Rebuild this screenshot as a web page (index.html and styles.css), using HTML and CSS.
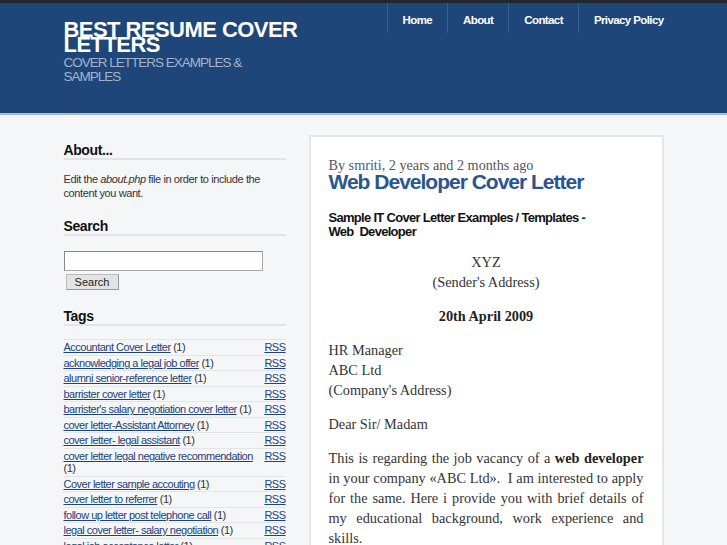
FILE: index.html
```html
<!DOCTYPE html>
<html>
<head>
<meta charset="utf-8">
<title>Best Resume Cover Letters</title>
<link rel="stylesheet" href="styles.css">
</head>
<body>
<header class="header">
  <div class="container header-inner">
    <div class="brand">
      <h1 class="site-title">BEST RESUME COVER LETTERS</h1>
      <div class="tagline">COVER LETTERS EXAMPLES &amp; SAMPLES</div>
      <div class="mark"></div>
    </div>
    <nav class="nav">
      <a href="#">Home</a>
      <a href="#">About</a>
      <a href="#">Contact</a>
      <a href="#" class="last">Privacy Policy</a>
    </nav>
  </div>
</header>
<div class="container page">
  <aside class="sidebar">
    <h2 class="widget-title">About...</h2>
    <p class="about-text">Edit the <em>about.php</em> file in order to include the content you want.</p>
    <h2 class="widget-title">Search</h2>
    <form class="search">
      <input type="text" class="search-input">
      <button type="button" class="search-btn">Search</button>
    </form>
    <h2 class="widget-title">Tags</h2>
    <table class="tags">
      <tr><td><a href="#">Accountant Cover Letter</a> (1)</td><td class="rss"><a href="#">RSS</a></td></tr>
      <tr><td><a href="#">acknowledging a legal job offer</a> (1)</td><td class="rss"><a href="#">RSS</a></td></tr>
      <tr><td><a href="#">alumni senior-reference letter</a> (1)</td><td class="rss"><a href="#">RSS</a></td></tr>
      <tr><td><a href="#">barrister cover letter</a> (1)</td><td class="rss"><a href="#">RSS</a></td></tr>
      <tr><td><a href="#">barrister's salary negotiation cover letter</a> (1)</td><td class="rss"><a href="#">RSS</a></td></tr>
      <tr><td><a href="#">cover letter-Assistant Attorney</a> (1)</td><td class="rss"><a href="#">RSS</a></td></tr>
      <tr><td><a href="#">cover letter- legal assistant</a> (1)</td><td class="rss"><a href="#">RSS</a></td></tr>
      <tr><td><a href="#">cover letter legal negative recommendation</a> (1)</td><td class="rss"><a href="#">RSS</a></td></tr>
      <tr><td><a href="#">Cover letter sample accouting</a> (1)</td><td class="rss"><a href="#">RSS</a></td></tr>
      <tr><td><a href="#">cover letter to referrer</a> (1)</td><td class="rss"><a href="#">RSS</a></td></tr>
      <tr><td><a href="#">follow up letter post telephone call</a> (1)</td><td class="rss"><a href="#">RSS</a></td></tr>
      <tr><td><a href="#">legal cover letter- salary negotiation</a> (1)</td><td class="rss"><a href="#">RSS</a></td></tr>
      <tr><td><a href="#">legal job acceptance letter</a> (1)</td><td class="rss"><a href="#">RSS</a></td></tr>
    </table>
  </aside>
  <main class="main">
    <article class="post">
      <div class="byline">By <a href="#">smriti</a>, 2 years and 2 months ago</div>
      <h2 class="post-title">Web Developer Cover Letter</h2>
      <h3 class="post-sub">Sample IT Cover Letter Examples / Templates - Web&nbsp; Developer</h3>
      <div class="letter">
        <p class="center">XYZ<br>(Sender's Address)</p>
        <p class="center"><strong>20th April 2009</strong></p>
        <p>HR Manager<br>ABC Ltd<br>(Company's Address)</p>
        <p>Dear Sir/ Madam</p>
        <p class="justify">This is regarding the job vacancy of a <strong>web developer</strong> in your company «ABC Ltd».&nbsp; I am interested to apply for the same. Here i provide you with brief details of my educational background, work experience and skills.</p>
      </div>
    </article>
  </main>
</div>
</body>
</html>
```
FILE: styles.css
```css
html, body {
  margin: 0;
  padding: 0;
}
body {
  background: #f5f6f8;
  font-family: "Liberation Sans", Arial, sans-serif;
  color: #333;
  overflow: hidden;
}
.container {
  width: 600px;
  margin: 0 auto;
}
.header {
  background: #1f4678;
  border-top: 3px solid #23272e;
  border-bottom: 2px solid #a9b8d2;
  height: 110px;
}
.header-inner {
  display: flex;
  justify-content: space-between;
  align-items: flex-start;
}
.brand {
  padding-top: 19px;
  width: 250px;
}
.site-title {
  margin: 0;
  font-size: 22px;
  line-height: 15px;
  font-weight: bold;
  letter-spacing: -0.55px;
  color: #fff;
  width: 250px;
}
.tagline {
  margin-top: 4px;
  font-size: 13.5px;
  line-height: 13.5px;
  letter-spacing: -1px;
  color: #a2b3cb;
  width: 200px;
}
.mark {
  margin-top: 25px;
  width: 5px;
  height: 1px;
  background: #3a3f48;
}
.nav {
  display: flex;
}
.nav a {
  display: block;
  color: #fff;
  text-decoration: none;
  font-weight: bold;
  font-size: 11.5px;
  letter-spacing: -0.6px;
  line-height: 27px;
  padding: 4px 15px 0 15px;
  border-left: 1px solid #3b5e8e;
  height: 26px;
}
.nav a.last {
  padding-right: 0;
}
.page {
  display: flex;
  gap: 23px;
  align-items: flex-start;
}
.sidebar {
  width: 222px;
  padding-top: 27px;
  font-size: 11px;
}
.widget-title {
  margin: 0;
  font-size: 14px;
  font-weight: bold;
  letter-spacing: -0.4px;
  color: #111;
  line-height: 16px;
  padding-bottom: 0;
  border-bottom: 2px solid #e1e3e7;
}
.about-text {
  margin: 12px 0 18px 0;
  line-height: 14px;
  letter-spacing: -0.4px;
  color: #333;
}
.search {
  margin: 15px 0 18px 0;
}
.search-input {
  display: block;
  box-sizing: border-box;
  width: 199px;
  height: 20px;
  margin: 0;
  border: 1px solid #aaa;
  border-top-color: #888;
  border-left-color: #888;
  background: #fdfdfd;
}
.search-btn {
  display: block;
  margin: 3px 0 0 2px;
  width: 53px;
  height: 16px;
  padding: 0;
  font-family: "Liberation Sans", Arial, sans-serif;
  font-size: 11px;
  color: #222;
  background: #e3e3e3;
  border: 1px solid #bbb;
  border-right-color: #999;
  border-bottom-color: #999;
}
.tags {
  margin-top: 13px;
  width: 222px;
  border-collapse: collapse;
  font-size: 11px;
  letter-spacing: -0.5px;
}
.tags td {
  border-top: 1px solid #e3e5e9;
  padding: 1px 0 1px 0;
  line-height: 12.5px;
  vertical-align: top;
  color: #333;
}
.tags a {
  color: #20427a;
}
.tags .rss {
  text-align: right;
  padding-left: 4px;
}
.main {
  width: 355px;
  padding-top: 20px;
}
.post {
  background: #fff;
  border: 2px solid #e6e6e6;
  padding: 19px 18px 20px 18px;
}
.byline {
  font-family: "Liberation Serif", "Times New Roman", serif;
  font-size: 14.2px;
  line-height: 18px;
  color: #555;
}
.byline a {
  color: #3b5f94;
  text-decoration: none;
}
.post-title {
  margin: -3px 0 0 0;
  font-size: 21px;
  line-height: 22px;
  letter-spacing: -1px;
  font-weight: bold;
  color: #2a5592;
}
.post-sub {
  margin: 18px 0 0 0;
  font-size: 13px;
  line-height: 14px;
  letter-spacing: -0.7px;
  font-weight: bold;
  color: #111;
  max-width: 270px;
}
.letter {
  font-family: "Liberation Serif", "Times New Roman", serif;
  font-size: 14.3px;
  line-height: 20px;
  color: #333;
  margin-top: 13px;
}
.letter p {
  margin: 0 0 14px 0;
}
.letter strong {
  color: #222;
}
.center {
  text-align: center;
}
.justify {
  text-align: justify;
}
```
